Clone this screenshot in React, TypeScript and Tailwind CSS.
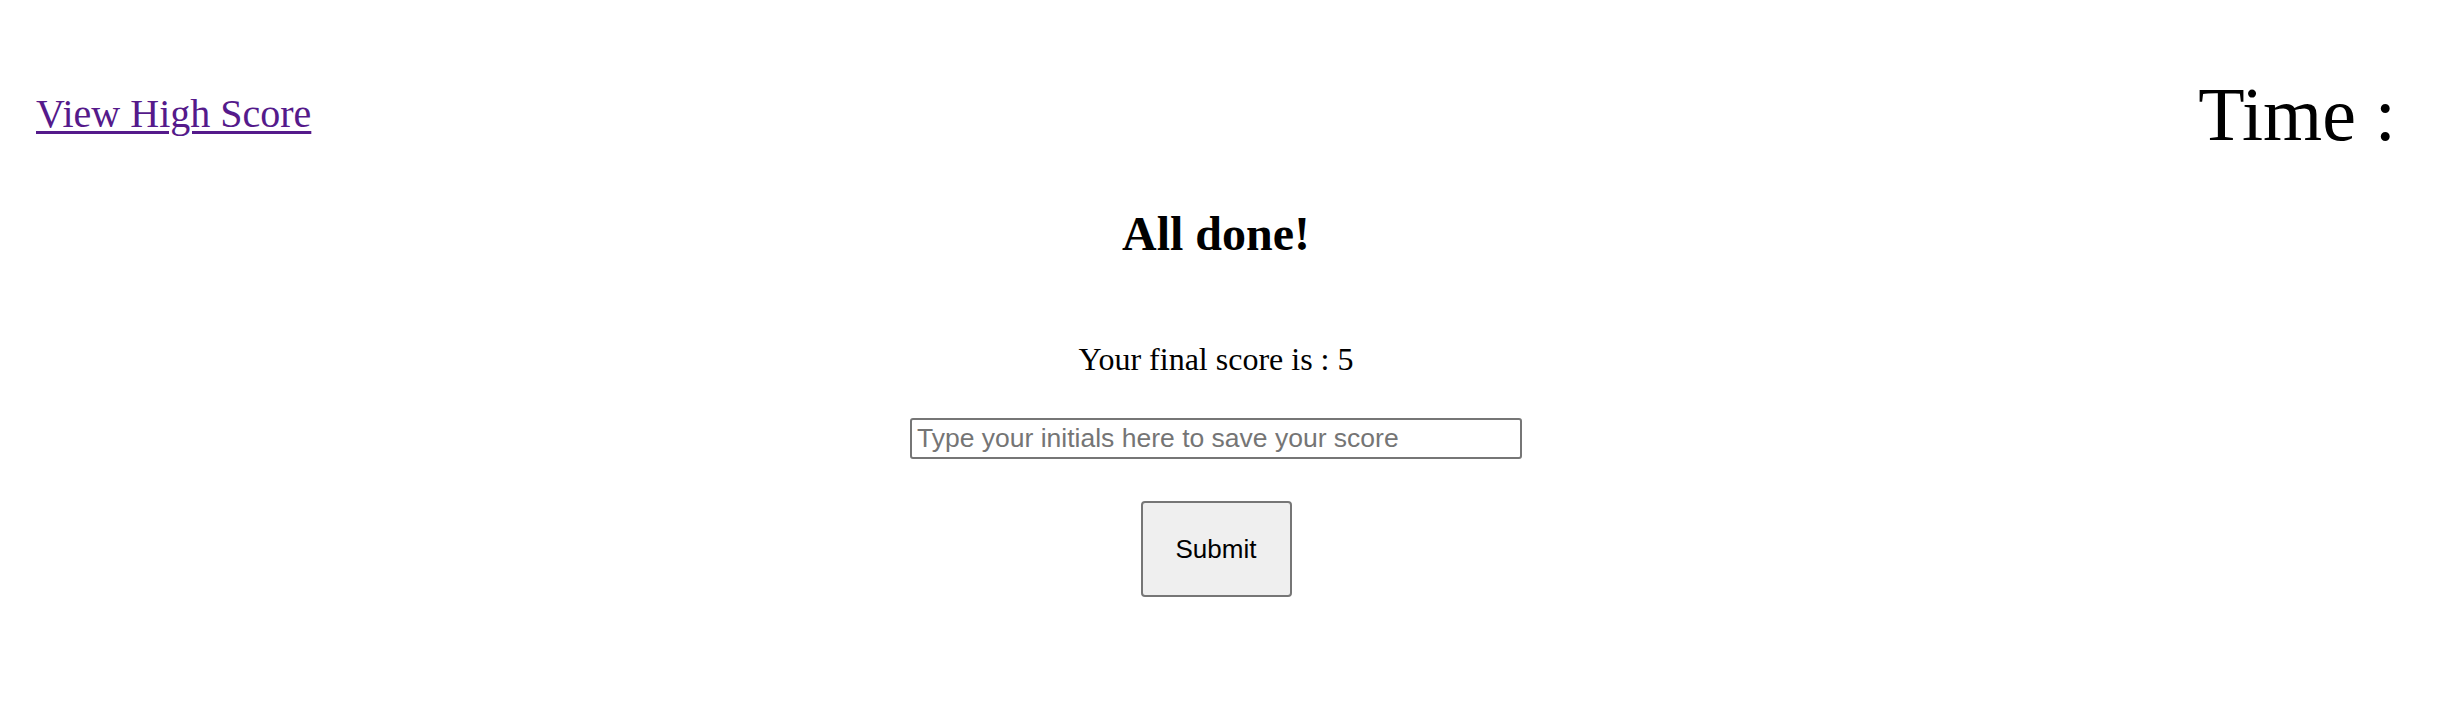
import React from "react";

export default function App() {
  return (
    <div className="min-h-[720px] bg-white pr-[30px] text-black" style={{ fontFamily: '"Liberation Serif", "Times New Roman", serif' }}>
      <header className="flex items-center justify-between px-[36px] pt-[76px]">
        <a href="#" className="text-[40px] leading-none text-[#551a8b] underline decoration-[3px] underline-offset-[4px]">
          View High Score
        </a>
        <div className="text-[76px] leading-none">Time : </div>
      </header>
      <main className="flex flex-col items-center">
        <h1 className="mt-[58px] text-[48px] font-bold leading-none">All done!</h1>
        <p className="mt-[85px] text-[32px] leading-none">Your final score is : 5</p>
        <input
          type="text"
          placeholder="Type your initials here to save your score"
          className="mt-[43px] h-[41px] w-[612px] rounded-[3px] border-2 border-[#767676] bg-white px-[5px] text-[26.5px] leading-none placeholder:text-[#757575] outline-none"
          style={{ fontFamily: '"Liberation Sans", Arial, sans-serif' }}
        />
        <button
          type="button"
          className="mt-[42px] flex h-[96px] w-[151px] items-center justify-center rounded-[4px] border-2 border-[#767676] bg-[#efefef] text-[26px] leading-none text-black"
          style={{ fontFamily: '"Liberation Sans", Arial, sans-serif' }}
        >
          Submit
        </button>
      </main>
    </div>
  );
}
